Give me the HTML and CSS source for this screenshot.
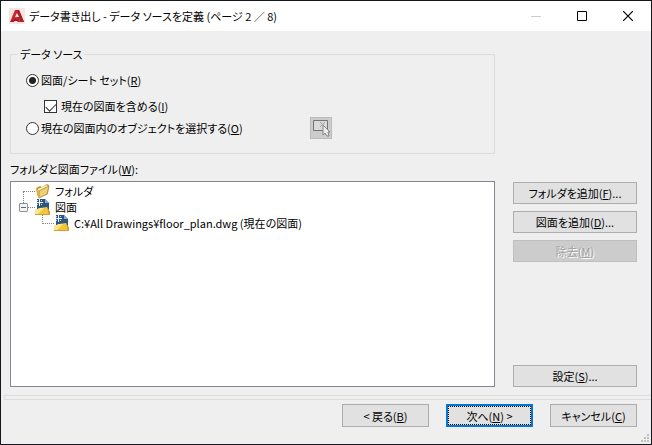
FILE: index.html
```html
<!DOCTYPE html>
<html lang="ja">
<head>
    <meta charset="UTF-8">
    <meta name="viewport" content="width=device-width, initial-scale=1.0">
    <title>データ書き出し</title>
    <link rel="stylesheet" href="styles.css">
</head>
<body>
    <svg class="symbols" width="0" height="0" aria-hidden="true">
        <symbol id="drawing" viewBox="0 0 16 16">
            <path d="M2 0h8l4 4v10H2z" fill="#2b5480"/>
            <path d="M10 0v4h4z" fill="#8ba9c6"/>
            <path d="M0 16v-5l5-2 7-1 3 5v3z" fill="#f3c63a"/>
            <path d="M0 11l5-2 4 0-6 6H0z" fill="#fbe68b"/>
            <path d="M12 8l3 5v3h-1z" fill="#c8962a"/>
            <path d="M0 15h15v1H0z" fill="#d3a22e"/>
            <path d="M4 0h1v3h3v1H5v3H4V4H1V3h3z" fill="#fff"/>
            <path d="M2 1h1v1H2zM6 1h1v1H6zM2 5h1v1H2zM6 5h1v1H6z" fill="#c5dbee"/>
        </symbol>
    </svg>

    <div class="dialog">
        <header class="titlebar">
            <svg class="logo" width="16" height="16" viewBox="0 0 16 16">
                <path d="M0 0h16v16H0z" fill="#f8e5e1"/>
                <path d="M1 14L6 2h4l5 12h-4l-1-3H6l-1 3z" fill="#c5282f"/>
                <path d="M8 5l2 4H6z" fill="#f8e5e1"/>
                <path d="M1 14l4-3h5l1 3H9l-1-1H5v1z" fill="#a21e27"/>
                <path d="M10 2l5 12h-3L8 2z" fill="#a51f2a"/>
            </svg>
            <h1>データ書き出し - データ ソースを定義 (ページ 2 ／ 8)</h1>
            <div class="window-buttons">
                <button type="button" aria-label="最小化" disabled>
                    <svg width="10" height="10" viewBox="0 0 10 10"><path d="M0 5.500h10" stroke="#ccc"/></svg>
                </button>
                <button type="button" aria-label="最大化">
                    <svg width="10" height="10" viewBox="0 0 10 10"><path d="M.5.5h9v9h-9z" fill="none" stroke="#000"/></svg>
                </button>
                <button type="button" aria-label="閉じる">
                    <svg width="10" height="10" viewBox="0 0 10 10"><path d="M0 0l10 10M10 0L0 10" stroke="#000" stroke-width="1.200"/></svg>
                </button>
            </div>
        </header>

        <main class="content">
            <div class="left">
                <fieldset class="source">
                    <legend>データ ソース</legend>
                    <div class="option">
                        <input type="radio" name="source" id="sheetSet" checked>
                        <label for="sheetSet">図面/シート セット(<u>R</u>)</label>
                    </div>
                    <div class="option sub">
                        <input type="checkbox" id="includeCurrent" checked>
                        <label for="includeCurrent">現在の図面を含める(<u>I</u>)</label>
                    </div>
                    <div class="option">
                        <input type="radio" name="source" id="pickObjects">
                        <label for="pickObjects" class="pick-label">現在の図面内のオブジェクトを選択する(<u>O</u>)</label>
                        <button type="button" class="pick" aria-label="オブジェクトを選択" disabled>
                            <svg width="18" height="18" viewBox="0 0 18 18">
                                <path d="M1.500 1.500h14v10h-14z" fill="#dadada" stroke="#747474"/>
                                <path d="M8 3l5 5M13 3L8 8" stroke="#a0a0a0"/>
                                <path d="M11 6v10l2-2 2 3h2l-1-4h2z" fill="#ececec" stroke="#858585"/>
                            </svg>
                        </button>
                    </div>
                </fieldset>

                <h2 id="filesLabel">フォルダと図面ファイル(<u>W</u>):</h2>
                <ul class="tree" role="tree" aria-labelledby="filesLabel">
                    <li class="node root-first" role="treeitem">
                        <span class="branch"></span>
                        <svg width="16" height="16" viewBox="0 0 16 16">
                            <path d="M1 5l4-2 2 1 5-3 2 1-1 9-9 4-1-2z" fill="#c39a35"/>
                            <path d="M3 6l9-4 1 2-2 8-7 2z" fill="#fff4c4"/>
                            <path d="M1 6l3 2 2-1 8-4-2 8-8 4z" fill="#efd277"/>
                            <path d="M4 8l2-1 8-4-2 8-8 4z" fill="none" stroke="#b39440"/>
                            <path d="M1 5l1 7 2 3V8z" fill="#d9b24a"/>
                        </svg>
                        <span>フォルダ</span>
                    </li>
                    <li class="node root-last" role="treeitem" aria-expanded="true">
                        <button type="button" class="expander" aria-label="折りたたむ"></button>
                        <span class="stub"></span>
                        <svg width="16" height="16"><use href="#drawing"/></svg>
                        <span>図面</span>
                    </li>
                    <li class="node child" role="treeitem">
                        <span class="branch"></span>
                        <svg width="16" height="16"><use href="#drawing"/></svg>
                        <span>C:¥All Drawings¥floor_plan.dwg (現在の図面)</span>
                    </li>
                </ul>
            </div>

            <div class="side">
                <button type="button" class="btn">フォルダを追加(<u>F</u>)...</button>
                <button type="button" class="btn">図面を追加(<u>D</u>)...</button>
                <button type="button" class="btn" disabled>除去(<u>M</u>)</button>
                <button type="button" class="btn settings">設定(<u>S</u>)...</button>
            </div>
        </main>

        <footer class="footer">
            <button type="button" class="btn">&lt; 戻る(<u>B</u>)</button>
            <button type="button" class="btn default">次へ(<u>N</u>) &gt;</button>
            <button type="button" class="btn">キャンセル(<u>C</u>)</button>
            <svg class="grip" width="8" height="8" viewBox="0 0 8 8">
                <path d="M6 0h2v2H6zM3 3h2v2H3zM6 3h2v2H6zM0 6h2v2H0zM3 6h2v2H3zM6 6h2v2H6z" fill="#bfbfbf"/>
            </svg>
        </footer>
    </div>
</body>
</html>
```

FILE: styles.css
```css
* {
    box-sizing: border-box;
}
body {
    margin: 0;
    font-family: "Noto Sans CJK JP", sans-serif;
    font-size: 11px;
    line-height: 16px;
    font-feature-settings: "palt";
    color: #000;
    background-color: #efefef;
}
button,
input {
    margin: 0;
    font: inherit;
    font-feature-settings: inherit;
}
u {
    text-underline-offset: 1px;
}
.symbols {
    position: absolute;
}
.dialog {
    display: flex;
    flex-direction: column;
    min-height: 100vh;
    border: 1px solid #17171f;
}

/* title bar */
.titlebar {
    display: flex;
    align-items: center;
    height: 30px;
    padding-left: 8px;
    background-color: #fff;
}
.titlebar h1 {
    flex: 1;
    margin: 0 0 0 4px;
    font-size: 11px;
    font-weight: normal;
    white-space: nowrap;
}
.window-buttons {
    display: flex;
}
.window-buttons button {
    display: flex;
    align-items: center;
    justify-content: center;
    width: 46px;
    height: 30px;
    padding: 0;
    border: none;
    background: none;
}

/* main area */
.content {
    flex: 1;
    display: grid;
    grid-template-columns: 1fr 124px;
    gap: 18px;
    padding: 15px 14px 8px 9px;
}
.left {
    display: flex;
    flex-direction: column;
}
.source {
    display: flex;
    flex-direction: column;
    height: 108px;
    margin: 0;
    padding: 6px 14px 0 15px;
    border: 1px solid #dcdcdc;
}
.source legend {
    margin-left: -8px;
    padding: 0 2px;
}
.option {
    display: flex;
    align-items: center;
    gap: 2px;
    height: 24px;
}
.option.sub {
    gap: 4px;
    padding: 4px 0 0 18px;
}
.option input {
    appearance: none;
    display: flex;
    justify-content: center;
    width: 13px;
    height: 13px;
    border: 1px solid #333;
    background-color: #fff;
}
.option input[type="radio"] {
    border-radius: 50%;
}
.option input[type="radio"]:checked {
    background-image: radial-gradient(circle, #222 3px, transparent 4px);
}
.option input[type="checkbox"]:checked::before {
    content: "";
    width: 5px;
    height: 9px;
    border: solid #333;
    border-width: 0 1px 1px 0;
    transform: rotate(45deg);
}
.pick-label {
    width: 267px;
}
.pick {
    display: flex;
    align-items: center;
    justify-content: center;
    width: 22px;
    height: 22px;
    padding: 0;
    border: 1px solid #bcbcbc;
    background-color: #ccc;
}
.left h2 {
    margin: 7px 0 4px;
    font-size: 11px;
    font-weight: normal;
}

/* tree */
.tree {
    flex: 1;
    margin: 0;
    padding: 1px 8px;
    list-style: none;
    border: 1px solid #828790;
    background-color: #fff;
}
.node {
    display: flex;
    align-items: center;
    height: 16px;
    white-space: nowrap;
}
.node svg {
    margin-right: 4px;
}
.branch {
    align-self: flex-end;
    width: 12px;
    height: 9px;
    border: 0 dotted #808080;
    border-left-width: 1px;
}
.root-first {
    padding-left: 4px;
}
.root-first .branch {
    height: 12px;
    margin-bottom: -4px;
    border-top-width: 1px;
}
.child {
    padding-left: 23px;
}
.child .branch {
    align-self: flex-start;
    border-bottom-width: 1px;
}
.expander {
    width: 9px;
    height: 9px;
    padding: 0;
    border: 1px solid #919191;
    border-radius: 1px;
    background: linear-gradient(#4b63a7, #4b63a7) center / 5px 1px no-repeat #f4f4f4;
}
.stub {
    width: 7px;
    border-top: 1px dotted #808080;
}

/* buttons */
.btn {
    height: 22px;
    padding: 0;
    line-height: 16px;
    white-space: nowrap;
    color: #000;
    border: 1px solid #adadad;
    background-color: #e1e1e1;
}
.btn:disabled {
    color: #9f9f9f;
    text-shadow: 1px 1px #fff;
    border-color: #bfbfbf;
    background-color: #ccc;
}
.side {
    display: flex;
    flex-direction: column;
    gap: 7px;
    padding-top: 136px;
}
.side .settings {
    margin-top: auto;
}

/* footer */
.footer {
    position: relative;
    display: flex;
    justify-content: flex-end;
    gap: 17px;
    margin-left: 3px;
    padding: 9px 14px 17px;
}
.footer::before {
    content: "";
    position: absolute;
    top: 0;
    left: 0;
    right: 0;
    height: 3px;
    border: 1px solid #dcdcdc;
    border-right: none;
}
.footer .btn {
    width: 87px;
    height: 23px;
}
.footer .default {
    border: 2px solid #0078d7;
    outline: 1px dotted #000;
    outline-offset: -3px;
}
.grip {
    position: absolute;
    right: 2px;
    bottom: 2px;
}
```
